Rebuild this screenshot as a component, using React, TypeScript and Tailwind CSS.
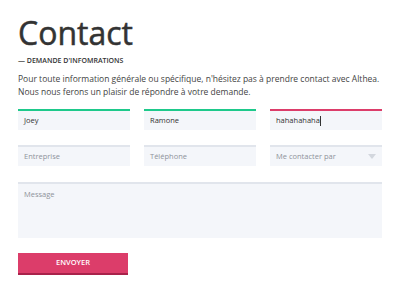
import React from "react";

export default function App() {
  return (
    <div className="w-[400px] h-[300px] bg-white overflow-hidden" style={{ fontFamily: '"Open Sans", "Liberation Sans", sans-serif' }}>
      <div className="pl-[18px] pr-[18px] pt-[13px]">
        <h1 className="text-[32px] leading-[40px] font-normal text-[#333333] [-webkit-text-stroke:0.5px_#333333]">Contact</h1>
        <div className="mt-[3px] text-[7px] leading-[10px] font-semibold text-[#333333] uppercase">— Demande d'infomrations</div>
        <p className="mt-[6px] text-[8.5px] leading-[13px] text-[#444444]">
          Pour toute information générale ou spécifique, n'hésitez pas à prendre contact avec Althea.
          <br />
          Nous nous ferons un plaisir de répondre à votre demande.
        </p>
        <div className="mt-[11px] grid grid-cols-3 gap-x-[14px] gap-y-[15px] w-[364px]">
          <div className="h-[21px] bg-[#f4f6fa] border-t-2 border-[#1ec98b] flex items-center px-[6px] text-[7.5px] text-[#333333]">Joey</div>
          <div className="h-[21px] bg-[#f4f6fa] border-t-2 border-[#1ec98b] flex items-center px-[6px] text-[7.5px] text-[#333333]">Ramone</div>
          <div className="h-[21px] bg-[#f4f6fa] border-t-2 border-[#dc3d6a] flex items-center px-[6px] text-[7.5px] text-[#333333]">
            hahahahaha<span className="inline-block w-px h-[10px] bg-[#333333]" />
          </div>
          <div className="h-[21px] bg-[#f4f6fa] border-t-2 border-[#e1e5ec] flex items-center px-[6px] text-[7.5px] text-[#8f939b]">Entreprise</div>
          <div className="h-[21px] bg-[#f4f6fa] border-t-2 border-[#e1e5ec] flex items-center px-[6px] text-[7.5px] text-[#8f939b]">Téléphone</div>
          <div className="h-[21px] bg-[#f4f6fa] border-t-2 border-[#e1e5ec] flex items-center justify-between pl-[6px] pr-[6px] text-[7.5px] text-[#8f939b]">
            <span>Me contacter par</span>
            <svg width="8" height="5" viewBox="0 0 8 5"><path d="M0 0 L8 0 L4 5 Z" fill="#d3d7de" /></svg>
          </div>
        </div>
        <div className="mt-[16px] w-[364px] h-[56px] bg-[#f4f6fa] border-t-2 border-[#e1e5ec] px-[6px] pt-[5px] text-[7.5px] text-[#8f939b]">Message</div>
        <button className="mt-[15px] w-[110px] h-[22px] bg-[#dc3d6a] border-b-2 border-[#a8224a] text-white text-[7.5px] font-semibold uppercase flex items-center justify-center">
          Envoyer
        </button>
      </div>
    </div>
  );
}
